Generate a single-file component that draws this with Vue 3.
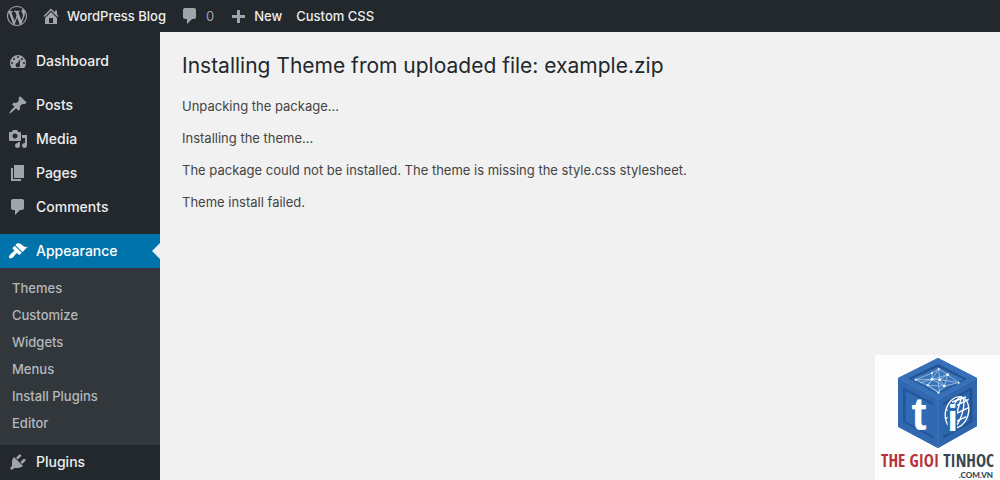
<script setup>
import { ref } from 'vue'

const icons = {
  wordpress: 'M20 10c0-5.51-4.49-10-10-10C4.48 0 0 4.49 0 10c0 5.52 4.48 10 10 10 5.51 0 10-4.48 10-10zM7.78 15.37L4.37 6.22c.55-.02 1.17-.08 1.17-.08.5-.06.44-1.13-.06-1.11 0 0-1.45.11-2.37.11-.18 0-.37 0-.58-.01C4.12 2.69 6.87 1.11 10 1.11c2.33 0 4.45.87 6.05 2.34-.68-.11-1.65.39-1.65 1.58 0 .74.45 1.36.9 2.1.35.61.55 1.36.55 2.46 0 1.49-1.4 5-1.4 5l-3.03-8.37c.54-.02.82-.17.82-.17.5-.05.44-1.25-.06-1.22 0 0-1.44.12-2.38.12-.87 0-2.33-.12-2.33-.12-.5-.03-.56 1.2-.06 1.22l.92.08 1.26 3.41zM17.41 10c.24-.64.74-1.87.43-4.25.7 1.29 1.05 2.71 1.05 4.25 0 3.29-1.73 6.24-4.4 7.78.97-2.59 1.94-5.2 2.92-7.78zM6.1 18.09C3.12 16.65 1.11 13.53 1.11 10c0-1.3.23-2.48.72-3.59C3.25 10.3 4.67 14.2 6.1 18.09zm4.03-6.63l2.58 6.98c-.86.29-1.76.45-2.71.45-.79 0-1.57-.11-2.29-.33.81-2.38 1.62-4.74 2.42-7.1z',
  home: 'M16 8.5l1.53 1.53-1.06 1.06L10 4.6l-6.47 6.49-1.06-1.06L10 2.5l4 4v-2h2v4zm-6-2.46l6 5.99V18H4v-5.97zM12 17v-5H8v5h4z',
  comment: 'M5 2h9c1.1 0 2 .9 2 2v7c0 1.1-.9 2-2 2h-2l-5 5v-5H5c-1.1 0-2-.9-2-2V4c0-1.1.9-2 2-2z',
  plus: 'M17 9v3h-5v5H9v-5H4V9h5V4h3v5h5z',
  dashboard: 'M3.76 17h12.48A8 8 0 1 0 3.76 17zM9 6a1 1 0 1 1 2 0 1 1 0 1 1-2 0zM5 8a1 1 0 1 1 2 0 1 1 0 1 1-2 0zm8 0a1 1 0 1 1 2 0 1 1 0 1 1-2 0zM3 12a1 1 0 1 1 2 0 1 1 0 1 1-2 0zm12 0a1 1 0 1 1 2 0 1 1 0 1 1-2 0zm-2.5-4.2l-.8 5.4a2.2 2.2 0 1 1-2.1-1.1z',
  posts: 'M10.44 3.02l1.82-1.82 6.36 6.35-1.83 1.82c-1.05-.68-2.48-.57-3.41.36l-.75.75c-.92.93-1.04 2.35-.35 3.41l-1.83 1.82-2.41-2.41-2.8 2.79c-.42.42-3.38 2.71-3.8 2.29s1.86-3.39 2.28-3.81l2.79-2.79L4.1 9.36l1.83-1.82c1.05.69 2.48.57 3.4-.36l.75-.75c.93-.92 1.05-2.35.36-3.41z',
  media: 'M13 11V4c0-.55-.45-1-1-1h-1.67L9 1H5L3.67 3H2c-.55 0-1 .45-1 1v7c0 .55.45 1 1 1h10c.55 0 1-.45 1-1zM7 4.5c1.38 0 2.5 1.12 2.5 2.5S8.38 9.5 7 9.5 4.5 8.38 4.5 7 5.62 4.5 7 4.5zM14 6h5v10.5c0 1.38-1.12 2.5-2.5 2.5S14 17.88 14 16.5s1.12-2.5 2.5-2.5c.17 0 .34.02.5.05V9h-3V6zm-4 8.05V13h2v3.5c0 1.38-1.12 2.5-2.5 2.5S7 17.88 7 16.5 8.12 14 9.5 14c.17 0 .34.02.5.05z',
  pages: 'M6 15V2h10v13H6zm-1 1h8v2H3V5h2v11z',
  appearance: 'M14.48 11.06L7.41 3.99l1.5-1.5c.5-.56 2.3-.47 3.51.32 1.21.8 1.43 1.28 2.91 2.1 1.18.64 2.45 1.26 4.45.85zm-.71.71L6.7 4.7 4.93 6.47c-.39.39-.39 1.02 0 1.41l1.06 1.06c.39.39.39 1.03 0 1.42-.6.6-1.43 1.11-2.21 1.69-.35.26-.7.53-1.01.84C1.43 14.23.4 16.08 1.4 17.07c.99 1 2.84-.03 4.18-1.36.31-.31.58-.66.85-1.02.57-.78 1.08-1.61 1.69-2.21.39-.39 1.02-.39 1.41 0l1.06 1.06c.39.39 1.02.39 1.41 0z',
  plugins: 'M13.11 4.36L9.87 7.6 8 5.73l3.24-3.24c.35-.34 1.05-.2 1.56.32.52.51.66 1.21.31 1.55zm-8 1.77l.91-1.12 9.01 9.01-1.19.84c-.71.71-2.63 1.16-3.82 1.16H6.14L4.9 17.26c-.59.59-1.54.59-2.12 0-.59-.58-.59-1.53 0-2.12l1.24-1.24v-3.88c0-1.13.4-3.19 1.09-3.89zm7.26 3.97l3.24-3.24c.34-.35 1.04-.21 1.55.31.52.51.66 1.21.31 1.55l-3.24 3.25z',
}

const groups = [
  ['Dashboard'],
  ['Posts', 'Media', 'Pages', 'Comments'],
  ['Appearance', 'Plugins'],
]

const submenu = ['Themes', 'Customize', 'Widgets', 'Menus', 'Install Plugins', 'Editor']

const messages = [
  'Unpacking the package…',
  'Installing the theme…',
  'The package could not be installed. The theme is missing the style.css stylesheet.',
  'Theme install failed.',
]

const current = ref('Appearance')

const iconFor = (name) => icons[name === 'Comments' ? 'comment' : name.toLowerCase()]
</script>

<template>
  <div class="wp-admin">
    <!-- Toolbar -->
    <header class="toolbar">
      <a href="#" class="bar-item" aria-label="About WordPress">
        <svg class="icon" viewBox="0 0 20 20"><path :d="icons.wordpress" /></svg>
      </a>
      <a href="#" class="bar-item">
        <svg class="icon" viewBox="0 0 20 20"><path :d="icons.home" /></svg>
        <span>WordPress Blog</span>
      </a>
      <a href="#" class="bar-item muted">
        <svg class="icon" viewBox="0 0 20 20"><path :d="icons.comment" /></svg>
        <span>0</span>
      </a>
      <a href="#" class="bar-item">
        <svg class="icon" viewBox="0 0 20 20"><path :d="icons.plus" /></svg>
        <span>New</span>
      </a>
      <a href="#" class="bar-item">Custom CSS</a>
    </header>

    <div class="body">
      <!-- Admin menu -->
      <nav class="menu">
        <ul v-for="(group, i) in groups" :key="i" class="menu-group">
          <li v-for="name in group" :key="name">
            <a href="#" class="menu-item" :class="{ current: name === current }" @click.prevent="current = name">
              <svg class="icon" viewBox="0 0 20 20"><path :d="iconFor(name)" fill-rule="evenodd" /></svg>
              <span class="menu-name">{{ name }}</span>
            </a>
            <ul v-if="name === 'Appearance'" class="submenu">
              <li v-for="sub in submenu" :key="sub"><a href="#">{{ sub }}</a></li>
            </ul>
          </li>
        </ul>
      </nav>

      <main class="content">
        <h1>Installing Theme from uploaded file: example.zip</h1>
        <p v-for="msg in messages" :key="msg">{{ msg }}</p>
      </main>
    </div>

    <!-- Site badge -->
    <div class="badge">
      <svg class="cube" viewBox="15 15 375 285">
        <path d="M204 24L321 84v144l-117 66L84 230V84z" fill="#2c62a9" />
        <path d="M204 24L321 84l-117 64L84 84z" fill="#3670b8" />
        <path d="M204 42L291 86l-87 46-89-47z" fill="#255396" />
        <path d="M204 51L280 88l-76 40-78-41z" fill="#3975bb" />
        <path d="M84 84l120 64v146L84 230z" fill="#3268b0" />
        <path d="M99 111l90 48v106l-90-49z" fill="#24569b" />
        <path d="M107 123l82 43v91l-82-43z" fill="#2f6ab2" />
        <path d="M321 84l-117 64v146l117-66z" fill="#2f66ae" />
        <path d="M307 111l-88 48v107l88-50z" fill="#235293" />
        <path d="M299 123l-80 43v91l80-45z" fill="#2c66ad" />
        <path d="M84 84l120 64L321 84M204 148v146" fill="none" stroke="#4a83c5" stroke-width="2" />
        <path
          d="M137 89l49-20 20-12 27 17 33 24-43 10-18 20-32-22-36-17zM137 89l49-1-13 18 13-18 20-31 3 32-23-1 37 20-14-19 24-15-10 34-50-2 36 22-5-40 57 9M186 69v19l47-14M150 98l36-10"
          fill="none" stroke="#b9d5ef" stroke-width="2"
        />
        <g fill="#fff">
          <circle cx="137" cy="89" r="3" />
          <circle cx="186" cy="69" r="3" />
          <circle cx="206" cy="57" r="3" />
          <circle cx="186" cy="88" r="4" />
          <circle cx="209" cy="89" r="4" />
          <circle cx="233" cy="74" r="4" />
          <circle cx="223" cy="108" r="4" />
          <circle cx="173" cy="106" r="3" />
          <circle cx="266" cy="98" r="3" />
          <circle cx="205" cy="128" r="3" />
        </g>
        <g fill="none" stroke="#fff" stroke-width="4">
          <ellipse cx="261" cy="187" rx="34" ry="48" transform="rotate(17 261 187)" />
          <ellipse cx="261" cy="187" rx="16" ry="48" transform="rotate(17 261 187)" />
          <path d="M275 141l-28 92M230 181l66-33M226 206l70-33M233 226l56-26M246 156l42-15" />
        </g>
        <path d="M233 172l28-14v82l-28 12z" fill="#2c66ad" />
        <text class="letter" x="147" y="241" font-size="136" text-anchor="middle">t</text>
        <text class="letter" x="248" y="242" font-size="112" text-anchor="middle">i</text>
      </svg>
      <div class="badge-name"><span class="red">THE GIOI</span> TINHOC</div>
      <div class="badge-domain">.COM.VN</div>
    </div>
  </div>
</template>

<style>
body {
  background: #f1f1f1;
}
</style>

<style scoped>
.wp-admin {
  position: relative;
  display: flex;
  flex-direction: column;
  min-height: 100vh;
  font-family: Inter, 'Liberation Sans', sans-serif;
  font-size: 13px;
  color: #444;
}
ul {
  margin: 0;
  padding: 0;
  list-style: none;
}
a {
  text-decoration: none;
}
.icon {
  flex: none;
  width: 20px;
  height: 20px;
  fill: #a0a5aa;
}
.toolbar {
  display: flex;
  align-items: center;
  gap: 14px;
  height: 32px;
  padding: 0 8px 0 7px;
  background: #23282d;
}
.bar-item {
  display: flex;
  align-items: center;
  gap: 6px;
  font-weight: 500;
  color: #eee;
}
.muted {
  color: #a0a5aa;
  font-weight: 400;
}
.body {
  display: flex;
  flex: 1;
}
.menu {
  flex: none;
  width: 160px;
  padding-top: 12px;
  background: #23282d;
}
.menu-group {
  margin-bottom: 10px;
}
.menu-group:last-child {
  margin-bottom: 0;
}
.menu-item {
  position: relative;
  display: flex;
  align-items: center;
  gap: 8px;
  height: 34px;
  padding-left: 8px;
  font-size: 14px;
  font-weight: 500;
  color: #eee;
}
.menu-name {
  padding-bottom: 1px;
}
.menu-item.current {
  background: #0073aa;
  color: #fff;
}
.current .icon {
  fill: #fff;
}
.current::after {
  content: '';
  position: absolute;
  top: 9px;
  right: 0;
  border: 8px solid transparent;
  border-left-width: 0;
  border-right-color: #f1f1f1;
}
.submenu {
  padding: 7px 0 8px;
  background: #32373c;
}
.submenu a {
  display: block;
  padding-left: 12px;
  font-weight: 500;
  line-height: 27px;
  color: #b4b9be;
}
.content {
  flex: 1;
  padding: 19px 22px;
}
h1 {
  margin: 0 0 15px;
  font-size: 21px;
  font-weight: 400;
  line-height: 30px;
  color: #23282d;
}
p {
  margin: 0 0 12px;
  line-height: 20px;
}
.badge {
  position: absolute;
  right: 0;
  bottom: 0;
  display: flex;
  flex-direction: column;
  align-items: center;
  width: 125px;
  height: 125px;
  background: #fdfdfd;
}
.cube {
  width: 125px;
  height: 95px;
}
.letter {
  font-family: 'Liberation Sans', sans-serif;
  font-weight: 700;
  fill: #fff;
}
.badge-name {
  font-family: 'Liberation Sans Narrow', 'Open Sans Condensed', 'Liberation Sans', sans-serif;
  font-size: 17px;
  font-weight: 700;
  line-height: 21px;
  white-space: nowrap;
  color: #38474f;
}
.red {
  color: #b8323a;
}
.badge-domain {
  align-self: flex-end;
  padding-right: 7px;
  font-family: Lato, sans-serif;
  font-size: 8px;
  font-weight: 900;
  line-height: 8px;
  color: #38474f;
}
</style>
